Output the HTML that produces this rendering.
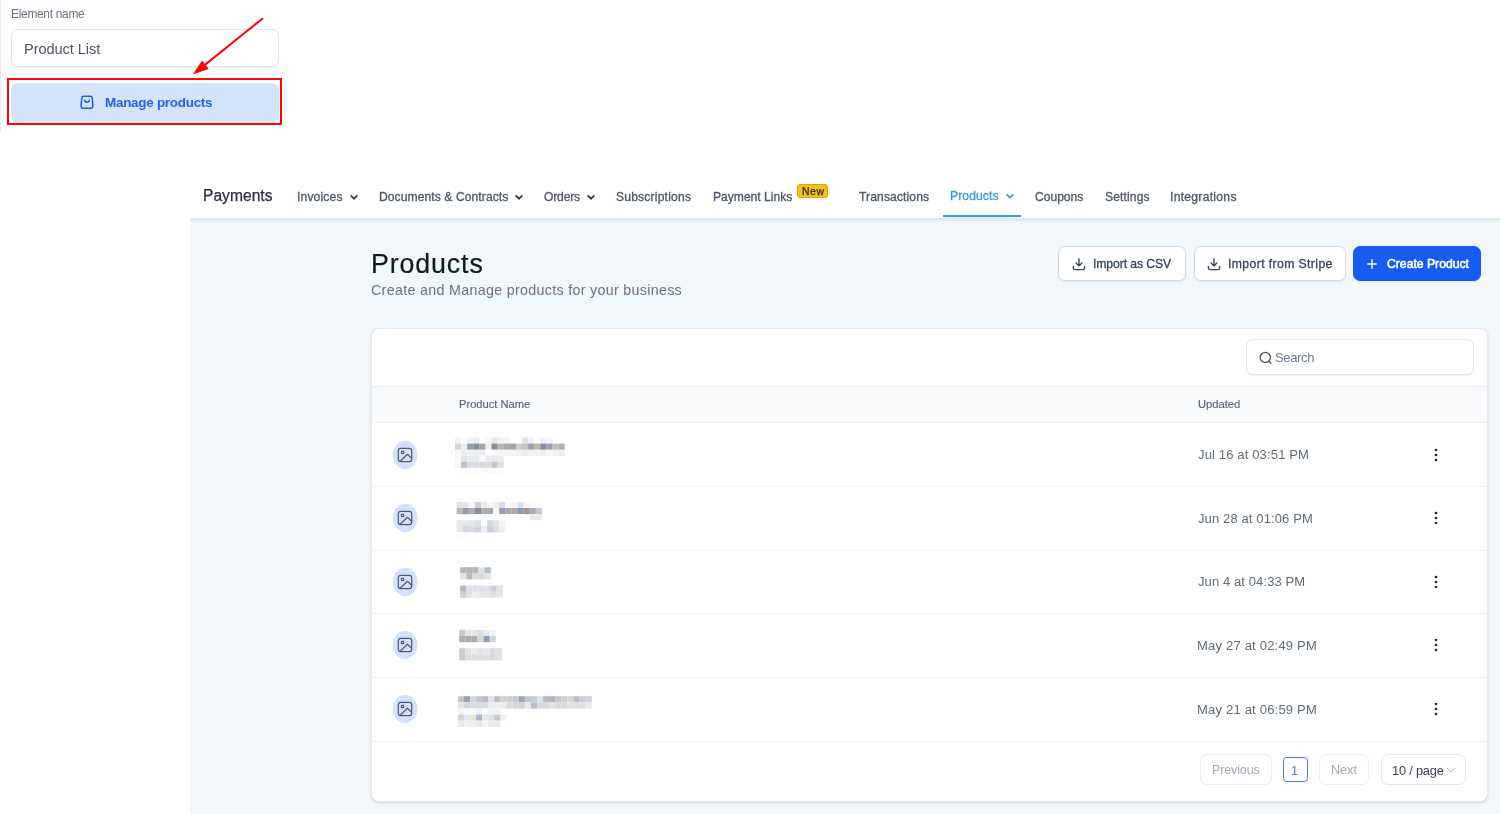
<!DOCTYPE html>
<html lang="en">
<head>
<meta charset="utf-8">
<title>Products</title>
<style>
*{box-sizing:border-box;margin:0;padding:0}
html,body{width:1500px;height:814px;overflow:hidden;background:#fff}
body{position:relative;font-family:"Liberation Sans",sans-serif;color:#374151}
.abs{position:absolute;white-space:nowrap}
.t{line-height:20px;height:20px;will-change:transform}
h1{font-weight:normal}
#leftline{left:0;top:0;width:1px;height:131px;background:#e9ebf2}
#inp{left:10.8px;top:29px;width:268.7px;height:38.4px;border:1px solid #e1e3eb;border-radius:7px;background:#fff;box-shadow:0 1px 1.5px rgba(16,24,40,.07)}
#mbtn{left:10.8px;top:83px;width:268.6px;height:40px;border-radius:7px;background:#d2e3fa}
#redbox{left:6.8px;top:78px;width:275.7px;height:46.8px;border:2.2px solid #fd0505}
#nav{left:190px;top:165px;width:1310px;height:53px;background:#fff}
#navsh{left:190px;top:218px;width:1310px;height:5px;background:linear-gradient(#e4e9ed 0,#dde3e8 22%,#e5ebef 50%,#eef3f6 75%,#f2f7fa 100%)}
#main{left:190px;top:218px;width:1310px;height:596px;background:#f2f7fa}
#uline{left:942.8px;top:214.5px;width:78.5px;height:2.2px;background:#3a9bdc}
#badge{left:797.2px;top:184px;width:31px;height:14px;background:#fbbf15;border:1px solid #dba30c;border-radius:3px}
.btn{top:246px;height:35px;border:1px solid #d4d9e2;border-radius:7px;background:#fff;box-shadow:0 1px 2px rgba(16,24,40,.06)}
#card{left:371px;top:328px;width:1117px;height:474px;background:#fff;border:1px solid #e7ebef;border-radius:8px;box-shadow:0 1px 3px rgba(16,24,40,.11),0 1px 2px rgba(16,24,40,.06)}
#search{left:1246px;top:339px;width:227.5px;height:36px;border:1px solid #e3e6ec;border-radius:7px;background:#fff;box-shadow:0 1px 1.5px rgba(16,24,40,.05)}
#thead{left:372px;top:385.8px;width:1115px;height:37.4px;background:#f9fafb;border-top:1px solid #edeff2;border-bottom:1px solid #eceef1}
.rl{left:372px;width:1115px;height:1px;background:#eef0f3}
.pb{top:754px;height:31px;border:1px solid #eceef2;border-radius:7px;background:#fff}
</style>
</head>
<body>
<div class="abs" id="leftline"></div>
<div class="abs" id="inp"></div>
<div class="abs" id="mbtn"></div>
<div class="abs" id="redbox"></div>
<svg class="abs" style="left:79px;top:94px" width="16" height="16" viewBox="0 0 16 16" fill="none" stroke="#2158ea" stroke-width="1.5" stroke-linecap="round" stroke-linejoin="round"><path d="M4.600 2.300h6.800c1 0 1.700.6 1.800 1.600l.7 7.900c.1 1.300-.7 2.400-2.100 2.400H4.200c-1.400 0-2.200-1.100-2.100-2.400l.7-7.900c.1-1 .8-1.600 1.800-1.600z"/><path d="M5.700 6.200c.3 2.600 4.300 2.600 4.600 0"/></svg>
<svg class="abs" style="left:180px;top:10px" width="100" height="75" viewBox="0 0 100 75"><line x1="82.3" y1="8.700" x2="24" y2="55.600" stroke="#fd0505" stroke-width="2" stroke-linecap="round"/><polygon points="12.700,64.500 22.100,50.500 28.700,59" fill="#fd0505"/></svg>

<div class="abs" id="main"></div>
<div class="abs" id="nav"></div>
<div class="abs" id="navsh"></div>
<div class="abs" id="uline"></div>
<div class="abs" id="badge"></div>
<svg class="abs" style="left:349px;top:193px" width="10" height="9" viewBox="0 0 10 9" fill="none" stroke="#333d4d" stroke-width="1.7"><path d="M1.600 2.300 5 5.700 8.400 2.300"/></svg>
<svg class="abs" style="left:514.400px;top:193px" width="10" height="9" viewBox="0 0 10 9" fill="none" stroke="#333d4d" stroke-width="1.7"><path d="M1.600 2.300 5 5.700 8.400 2.300"/></svg>
<svg class="abs" style="left:586.200px;top:193px" width="10" height="9" viewBox="0 0 10 9" fill="none" stroke="#333d4d" stroke-width="1.7"><path d="M1.600 2.300 5 5.700 8.400 2.300"/></svg>
<svg class="abs" style="left:1005.200px;top:192.200px" width="10" height="9" viewBox="0 0 10 9" fill="none" stroke="#3a9bdc" stroke-width="1.7"><path d="M1.600 2.300 5 5.700 8.400 2.300"/></svg>

<div class="abs btn" style="left:1058px;width:128px"></div>
<div class="abs btn" style="left:1193.600px;width:152px"></div>
<div class="abs btn" style="left:1352.800px;width:128.200px;background:#165cef;border-color:#165cef"></div>
<svg class="abs" style="left:1071.800px;top:257.400px" width="14" height="14" viewBox="0 0 14 14" fill="none" stroke="#3a4557" stroke-width="1.35" stroke-linecap="round" stroke-linejoin="round"><path d="M7 1.600v7.200M4.100 6 7 8.900 9.900 6M1.400 9.300v1.600c0 1 .7 1.700 1.700 1.700h7.800c1 0 1.700-.7 1.700-1.700V9.300"/></svg>
<svg class="abs" style="left:1207.200px;top:257.400px" width="14" height="14" viewBox="0 0 14 14" fill="none" stroke="#3a4557" stroke-width="1.35" stroke-linecap="round" stroke-linejoin="round"><path d="M7 1.600v7.200M4.100 6 7 8.900 9.900 6M1.400 9.300v1.600c0 1 .7 1.700 1.700 1.700h7.800c1 0 1.700-.7 1.700-1.700V9.300"/></svg>
<svg class="abs" style="left:1366.100px;top:257.900px" width="12" height="12" viewBox="0 0 12 12" fill="none" stroke="#fff" stroke-width="1.400"><path d="M6 1.300v9.400M1.300 6h9.400"/></svg>

<div class="abs" id="card"></div>
<div class="abs" id="search"></div>
<svg class="abs" style="left:1258px;top:350px" width="16" height="16" viewBox="0 0 16 16" fill="none" stroke="#4a5466" stroke-width="1.3" stroke-linecap="round"><circle cx="7.300" cy="7.400" r="5.100"/><path d="M11 11.200 13 13.200"/></svg>
<div class="abs" id="thead"></div>
<div class="abs rl" style="top:486.200px"></div>
<div class="abs rl" style="top:549.800px"></div>
<div class="abs rl" style="top:613.400px"></div>
<div class="abs rl" style="top:677px"></div>
<div class="abs rl" style="top:740.600px"></div>
<!--GEN-->
<svg class="abs" style="left:0;top:0;filter:blur(.45px)" width="1500" height="814" viewBox="0 0 1500 814">
<rect x="455.0" y="437.6" width="6.19" height="6.2" fill="#f3f3f5"/>
<rect x="461.1" y="437.6" width="6.19" height="6.2" fill="#fafafa"/>
<rect x="467.2" y="437.6" width="6.19" height="6.2" fill="#eef2f6"/>
<rect x="473.3" y="437.6" width="6.19" height="6.2" fill="#ededee"/>
<rect x="485.4" y="437.6" width="6.19" height="6.2" fill="#fbf8f3"/>
<rect x="491.5" y="437.6" width="6.19" height="6.2" fill="#e3e9ee"/>
<rect x="497.6" y="437.6" width="6.19" height="6.2" fill="#f3f3f2"/>
<rect x="503.7" y="437.6" width="6.19" height="6.2" fill="#f4f5f9"/>
<rect x="522.0" y="437.6" width="6.19" height="6.2" fill="#e4e4e5"/>
<rect x="528.1" y="437.6" width="6.19" height="6.2" fill="#f0f1f4"/>
<rect x="534.2" y="437.6" width="6.19" height="6.2" fill="#fdfcfa"/>
<rect x="540.3" y="437.6" width="6.19" height="6.2" fill="#eef0f6"/>
<rect x="546.4" y="437.6" width="6.19" height="6.2" fill="#f2f2f4"/>
<rect x="455.0" y="443.6" width="6.19" height="6.2" fill="#dcd5d8"/>
<rect x="461.1" y="443.6" width="6.19" height="6.2" fill="#eceee8"/>
<rect x="467.2" y="443.6" width="6.19" height="6.2" fill="#8d9db0"/>
<rect x="473.3" y="443.6" width="6.19" height="6.2" fill="#8c8a9e"/>
<rect x="479.4" y="443.6" width="6.19" height="6.2" fill="#a3a39c"/>
<rect x="485.4" y="443.6" width="6.19" height="6.2" fill="#e6eff6"/>
<rect x="491.5" y="443.6" width="6.19" height="6.2" fill="#95888e"/>
<rect x="497.6" y="443.6" width="6.19" height="6.2" fill="#b0b5ba"/>
<rect x="503.7" y="443.6" width="6.19" height="6.2" fill="#a6a9ad"/>
<rect x="509.8" y="443.6" width="6.19" height="6.2" fill="#9ba5a3"/>
<rect x="515.9" y="443.6" width="6.19" height="6.2" fill="#c9ced4"/>
<rect x="522.0" y="443.6" width="6.19" height="6.2" fill="#c1c3c6"/>
<rect x="528.1" y="443.6" width="6.19" height="6.2" fill="#a0a1aa"/>
<rect x="534.2" y="443.6" width="6.19" height="6.2" fill="#bab6ac"/>
<rect x="540.3" y="443.6" width="6.19" height="6.2" fill="#7d8dab"/>
<rect x="546.4" y="443.6" width="6.19" height="6.2" fill="#a39fa8"/>
<rect x="552.4" y="443.6" width="6.19" height="6.2" fill="#c0bfbb"/>
<rect x="558.5" y="443.6" width="6.19" height="6.2" fill="#a9b3c3"/>
<rect x="455.0" y="449.7" width="6.19" height="6.2" fill="#fbf9f8"/>
<rect x="461.1" y="449.7" width="6.19" height="6.2" fill="#eceef0"/>
<rect x="467.2" y="449.7" width="6.19" height="6.2" fill="#eff1f6"/>
<rect x="473.3" y="449.7" width="6.19" height="6.2" fill="#efeff0"/>
<rect x="479.4" y="449.7" width="6.19" height="6.2" fill="#eeedee"/>
<rect x="485.4" y="449.7" width="6.19" height="6.2" fill="#fbfdfe"/>
<rect x="491.5" y="449.7" width="6.19" height="6.2" fill="#f6f7f7"/>
<rect x="497.6" y="449.7" width="6.19" height="6.2" fill="#f5f5f3"/>
<rect x="503.7" y="449.7" width="6.19" height="6.2" fill="#f3f4f6"/>
<rect x="509.8" y="449.7" width="6.19" height="6.2" fill="#f5f4f3"/>
<rect x="515.9" y="449.7" width="6.19" height="6.2" fill="#eef1f5"/>
<rect x="522.0" y="449.7" width="6.19" height="6.2" fill="#ececec"/>
<rect x="528.1" y="449.7" width="6.19" height="6.2" fill="#f3f3f5"/>
<rect x="534.2" y="449.7" width="6.19" height="6.2" fill="#f0f2f4"/>
<rect x="540.3" y="449.7" width="6.19" height="6.2" fill="#ebedef"/>
<rect x="546.4" y="449.7" width="6.19" height="6.2" fill="#f8f6f3"/>
<rect x="552.4" y="449.7" width="6.19" height="6.2" fill="#eff0f2"/>
<rect x="558.5" y="449.7" width="6.19" height="6.2" fill="#eeeff0"/>
<rect x="455.0" y="455.7" width="6.19" height="6.2" fill="#fbf8f6"/>
<rect x="461.1" y="455.7" width="6.19" height="6.2" fill="#dfe5ea"/>
<rect x="467.2" y="455.7" width="6.19" height="6.2" fill="#e8eaec"/>
<rect x="473.3" y="455.7" width="6.19" height="6.2" fill="#ebebec"/>
<rect x="479.4" y="455.7" width="6.19" height="6.2" fill="#f7fafc"/>
<rect x="485.4" y="455.7" width="6.19" height="6.2" fill="#ebe9e9"/>
<rect x="491.5" y="455.7" width="6.19" height="6.2" fill="#e8e9ed"/>
<rect x="497.6" y="455.7" width="6.19" height="6.2" fill="#e9eef3"/>
<rect x="455.0" y="461.8" width="6.19" height="6.2" fill="#f8f4f2"/>
<rect x="461.1" y="461.8" width="6.19" height="6.2" fill="#b3c0d1"/>
<rect x="467.2" y="461.8" width="6.19" height="6.2" fill="#d9dade"/>
<rect x="473.3" y="461.8" width="6.19" height="6.2" fill="#dcdde0"/>
<rect x="479.4" y="461.8" width="6.19" height="6.2" fill="#d6dbe2"/>
<rect x="485.4" y="461.8" width="6.19" height="6.2" fill="#dbdcdc"/>
<rect x="491.5" y="461.8" width="6.19" height="6.2" fill="#c2c5d2"/>
<rect x="497.6" y="461.8" width="6.19" height="6.2" fill="#dce0e5"/>
<rect x="461.1" y="467.8" width="6.19" height="6.2" fill="#fafafa"/>
<rect x="467.2" y="467.8" width="6.19" height="6.2" fill="#fdfdfd"/>
<rect x="473.3" y="467.8" width="6.19" height="6.2" fill="#fbfbfb"/>
<rect x="479.4" y="467.8" width="6.19" height="6.2" fill="#fefefe"/>
<rect x="485.4" y="467.8" width="6.19" height="6.2" fill="#fbfbfc"/>
<rect x="491.5" y="467.8" width="6.19" height="6.2" fill="#fbfbfb"/>
<rect x="497.6" y="467.8" width="6.19" height="6.2" fill="#fdfdfd"/>
<rect x="456.6" y="502.0" width="6.19" height="6.2" fill="#e3e3e4"/>
<rect x="462.7" y="502.0" width="6.19" height="6.2" fill="#e5e6e7"/>
<rect x="468.8" y="502.0" width="6.19" height="6.2" fill="#f8f8f6"/>
<rect x="474.9" y="502.0" width="6.19" height="6.2" fill="#cfd0d2"/>
<rect x="481.0" y="502.0" width="6.19" height="6.2" fill="#e8ecea"/>
<rect x="487.1" y="502.0" width="6.19" height="6.2" fill="#f6f7f7"/>
<rect x="493.1" y="502.0" width="6.19" height="6.2" fill="#f3efe8"/>
<rect x="499.2" y="502.0" width="6.19" height="6.2" fill="#d9dde7"/>
<rect x="505.3" y="502.0" width="6.19" height="6.2" fill="#f8f9f9"/>
<rect x="511.4" y="502.0" width="6.19" height="6.2" fill="#f6f4ef"/>
<rect x="517.5" y="502.0" width="6.19" height="6.2" fill="#dde2e9"/>
<rect x="523.6" y="502.0" width="6.19" height="6.2" fill="#f7f7f7"/>
<rect x="529.7" y="502.0" width="6.19" height="6.2" fill="#f9f9f8"/>
<rect x="535.8" y="502.0" width="6.19" height="6.2" fill="#fcfcfc"/>
<rect x="456.6" y="508.0" width="6.19" height="6.2" fill="#b9babf"/>
<rect x="462.7" y="508.0" width="6.19" height="6.2" fill="#9f9a9f"/>
<rect x="468.8" y="508.0" width="6.19" height="6.2" fill="#a5b0bb"/>
<rect x="474.9" y="508.0" width="6.19" height="6.2" fill="#8b8e93"/>
<rect x="481.0" y="508.0" width="6.19" height="6.2" fill="#adb0ab"/>
<rect x="487.1" y="508.0" width="6.19" height="6.2" fill="#9ba9b8"/>
<rect x="493.1" y="508.0" width="6.19" height="6.2" fill="#fff9ef"/>
<rect x="499.2" y="508.0" width="6.19" height="6.2" fill="#939db9"/>
<rect x="505.3" y="508.0" width="6.19" height="6.2" fill="#a9a8ab"/>
<rect x="511.4" y="508.0" width="6.19" height="6.2" fill="#a7abab"/>
<rect x="517.5" y="508.0" width="6.19" height="6.2" fill="#8797b4"/>
<rect x="523.6" y="508.0" width="6.19" height="6.2" fill="#a99396"/>
<rect x="529.7" y="508.0" width="6.19" height="6.2" fill="#a8b0b6"/>
<rect x="535.8" y="508.0" width="6.19" height="6.2" fill="#c5c8d6"/>
<rect x="468.8" y="514.0" width="6.19" height="6.2" fill="#fdfdfd"/>
<rect x="474.9" y="514.0" width="6.19" height="6.2" fill="#fdfdfd"/>
<rect x="481.0" y="514.0" width="6.19" height="6.2" fill="#fdfdfd"/>
<rect x="487.1" y="514.0" width="6.19" height="6.2" fill="#fefefe"/>
<rect x="499.2" y="514.0" width="6.19" height="6.2" fill="#fefefe"/>
<rect x="505.3" y="514.0" width="6.19" height="6.2" fill="#fdfdfd"/>
<rect x="511.4" y="514.0" width="6.19" height="6.2" fill="#fdfdfd"/>
<rect x="517.5" y="514.0" width="6.19" height="6.2" fill="#fdfdfd"/>
<rect x="529.7" y="514.0" width="6.19" height="6.2" fill="#ecebe8"/>
<rect x="535.8" y="514.0" width="6.19" height="6.2" fill="#e9eef4"/>
<rect x="456.6" y="520.2" width="6.19" height="6.2" fill="#ebe7e4"/>
<rect x="462.7" y="520.2" width="6.19" height="6.2" fill="#e3e8ee"/>
<rect x="468.8" y="520.2" width="6.19" height="6.2" fill="#e2e5ea"/>
<rect x="474.9" y="520.2" width="6.19" height="6.2" fill="#dddcdf"/>
<rect x="481.0" y="520.2" width="6.19" height="6.2" fill="#fafbfb"/>
<rect x="487.1" y="520.2" width="6.19" height="6.2" fill="#d4d9e1"/>
<rect x="493.1" y="520.2" width="6.19" height="6.2" fill="#e3e2e3"/>
<rect x="499.2" y="520.2" width="6.19" height="6.2" fill="#eff2f7"/>
<rect x="456.6" y="526.2" width="6.19" height="6.2" fill="#ece8e4"/>
<rect x="462.7" y="526.2" width="6.19" height="6.2" fill="#cfd9e5"/>
<rect x="468.8" y="526.2" width="6.19" height="6.2" fill="#d9dde2"/>
<rect x="474.9" y="526.2" width="6.19" height="6.2" fill="#d6d4d8"/>
<rect x="481.0" y="526.2" width="6.19" height="6.2" fill="#ebecee"/>
<rect x="487.1" y="526.2" width="6.19" height="6.2" fill="#c4d0df"/>
<rect x="493.1" y="526.2" width="6.19" height="6.2" fill="#dddcde"/>
<rect x="499.2" y="526.2" width="6.19" height="6.2" fill="#e9eef3"/>
<rect x="456.6" y="532.3" width="6.19" height="6.2" fill="#fbfbfb"/>
<rect x="462.7" y="532.3" width="6.19" height="6.2" fill="#fcfcfc"/>
<rect x="460.2" y="567.2" width="6.19" height="6.2" fill="#b4b9c0"/>
<rect x="466.3" y="567.2" width="6.19" height="6.2" fill="#b9b2b8"/>
<rect x="472.4" y="567.2" width="6.19" height="6.2" fill="#b5b7bb"/>
<rect x="478.5" y="567.2" width="6.19" height="6.2" fill="#e1e2e8"/>
<rect x="484.6" y="567.2" width="6.19" height="6.2" fill="#b5bec6"/>
<rect x="460.2" y="573.2" width="6.19" height="6.2" fill="#e1e6e3"/>
<rect x="466.3" y="573.2" width="6.19" height="6.2" fill="#c0b8bc"/>
<rect x="472.4" y="573.2" width="6.19" height="6.2" fill="#d9dbdb"/>
<rect x="478.5" y="573.2" width="6.19" height="6.2" fill="#d5d9dd"/>
<rect x="484.6" y="573.2" width="6.19" height="6.2" fill="#e0e5e4"/>
<rect x="460.2" y="585.6" width="6.19" height="6.2" fill="#b1bac9"/>
<rect x="466.3" y="585.6" width="6.19" height="6.2" fill="#e3e2e1"/>
<rect x="472.4" y="585.6" width="6.19" height="6.2" fill="#dde0e8"/>
<rect x="478.5" y="585.6" width="6.19" height="6.2" fill="#dcdfe6"/>
<rect x="484.6" y="585.6" width="6.19" height="6.2" fill="#e0e1e4"/>
<rect x="490.6" y="585.6" width="6.19" height="6.2" fill="#cacdd5"/>
<rect x="496.7" y="585.6" width="6.19" height="6.2" fill="#e0e2ea"/>
<rect x="460.2" y="591.6" width="6.19" height="6.2" fill="#c9d0da"/>
<rect x="466.3" y="591.6" width="6.19" height="6.2" fill="#e1e2e6"/>
<rect x="472.4" y="591.6" width="6.19" height="6.2" fill="#ecedef"/>
<rect x="478.5" y="591.6" width="6.19" height="6.2" fill="#e5e6ea"/>
<rect x="484.6" y="591.6" width="6.19" height="6.2" fill="#e4e5e9"/>
<rect x="490.6" y="591.6" width="6.19" height="6.2" fill="#dedfe4"/>
<rect x="496.7" y="591.6" width="6.19" height="6.2" fill="#e7e8ee"/>
<rect x="459.2" y="630.0" width="6.19" height="6.2" fill="#c9c9cb"/>
<rect x="465.3" y="630.0" width="6.19" height="6.2" fill="#e3e4e7"/>
<rect x="471.4" y="630.0" width="6.19" height="6.2" fill="#e8e8ea"/>
<rect x="477.5" y="630.0" width="6.19" height="6.2" fill="#dddcde"/>
<rect x="483.6" y="630.0" width="6.19" height="6.2" fill="#eaecec"/>
<rect x="489.6" y="630.0" width="6.19" height="6.2" fill="#f3f4f7"/>
<rect x="459.2" y="636.0" width="6.19" height="6.2" fill="#b0b0b4"/>
<rect x="465.3" y="636.0" width="6.19" height="6.2" fill="#a9adad"/>
<rect x="471.4" y="636.0" width="6.19" height="6.2" fill="#adadb1"/>
<rect x="477.5" y="636.0" width="6.19" height="6.2" fill="#d9dac5"/>
<rect x="483.6" y="636.0" width="6.19" height="6.2" fill="#8e9bb3"/>
<rect x="489.6" y="636.0" width="6.19" height="6.2" fill="#d2d7de"/>
<rect x="459.2" y="648.2" width="6.19" height="6.2" fill="#c8cdd3"/>
<rect x="465.3" y="648.2" width="6.19" height="6.2" fill="#e3e0e4"/>
<rect x="471.4" y="648.2" width="6.19" height="6.2" fill="#e8eced"/>
<rect x="477.5" y="648.2" width="6.19" height="6.2" fill="#dfe3ea"/>
<rect x="483.6" y="648.2" width="6.19" height="6.2" fill="#e7e7e8"/>
<rect x="489.6" y="648.2" width="6.19" height="6.2" fill="#d9dadc"/>
<rect x="495.7" y="648.2" width="6.19" height="6.2" fill="#d9e0e6"/>
<rect x="459.2" y="654.2" width="6.19" height="6.2" fill="#c9cacd"/>
<rect x="465.3" y="654.2" width="6.19" height="6.2" fill="#dddee4"/>
<rect x="471.4" y="654.2" width="6.19" height="6.2" fill="#dde2e8"/>
<rect x="477.5" y="654.2" width="6.19" height="6.2" fill="#dde1e8"/>
<rect x="483.6" y="654.2" width="6.19" height="6.2" fill="#dfdfe3"/>
<rect x="489.6" y="654.2" width="6.19" height="6.2" fill="#d8d9db"/>
<rect x="495.7" y="654.2" width="6.19" height="6.2" fill="#d8dfe6"/>
<rect x="457.8" y="690.2" width="6.19" height="6.2" fill="#fcfcfc"/>
<rect x="463.9" y="690.2" width="6.19" height="6.2" fill="#fdfdfd"/>
<rect x="482.2" y="690.2" width="6.19" height="6.2" fill="#fdfdfd"/>
<rect x="494.3" y="690.2" width="6.19" height="6.2" fill="#fcfcfc"/>
<rect x="500.4" y="690.2" width="6.19" height="6.2" fill="#fdfdfd"/>
<rect x="518.7" y="690.2" width="6.19" height="6.2" fill="#fcfcfc"/>
<rect x="543.1" y="690.2" width="6.19" height="6.2" fill="#fcfcfc"/>
<rect x="549.1" y="690.2" width="6.19" height="6.2" fill="#fcfcfc"/>
<rect x="585.7" y="690.2" width="6.19" height="6.2" fill="#fdfdfd"/>
<rect x="457.8" y="696.2" width="6.19" height="6.2" fill="#c7c5c8"/>
<rect x="463.9" y="696.2" width="6.19" height="6.2" fill="#96a0a8"/>
<rect x="470.0" y="696.2" width="6.19" height="6.2" fill="#d7d7d9"/>
<rect x="476.1" y="696.2" width="6.19" height="6.2" fill="#c2c6cc"/>
<rect x="482.2" y="696.2" width="6.19" height="6.2" fill="#b9b7be"/>
<rect x="488.2" y="696.2" width="6.19" height="6.2" fill="#e1e2e7"/>
<rect x="494.3" y="696.2" width="6.19" height="6.2" fill="#b8bdc0"/>
<rect x="500.4" y="696.2" width="6.19" height="6.2" fill="#cfcfd5"/>
<rect x="506.5" y="696.2" width="6.19" height="6.2" fill="#cfcfcf"/>
<rect x="512.6" y="696.2" width="6.19" height="6.2" fill="#c5c9d5"/>
<rect x="518.7" y="696.2" width="6.19" height="6.2" fill="#9fa7b0"/>
<rect x="524.8" y="696.2" width="6.19" height="6.2" fill="#cbc8c1"/>
<rect x="530.9" y="696.2" width="6.19" height="6.2" fill="#c5d0d2"/>
<rect x="537.0" y="696.2" width="6.19" height="6.2" fill="#e0e3e9"/>
<rect x="543.1" y="696.2" width="6.19" height="6.2" fill="#b4bbbb"/>
<rect x="549.1" y="696.2" width="6.19" height="6.2" fill="#b4b2bd"/>
<rect x="555.2" y="696.2" width="6.19" height="6.2" fill="#c3c5c9"/>
<rect x="561.3" y="696.2" width="6.19" height="6.2" fill="#d2d0d0"/>
<rect x="567.4" y="696.2" width="6.19" height="6.2" fill="#d6d8d8"/>
<rect x="573.5" y="696.2" width="6.19" height="6.2" fill="#bdbdc8"/>
<rect x="579.6" y="696.2" width="6.19" height="6.2" fill="#d0d0cd"/>
<rect x="585.7" y="696.2" width="6.19" height="6.2" fill="#d2d0e0"/>
<rect x="457.8" y="702.4" width="6.19" height="6.2" fill="#e5e3e2"/>
<rect x="463.9" y="702.4" width="6.19" height="6.2" fill="#d5d6da"/>
<rect x="470.0" y="702.4" width="6.19" height="6.2" fill="#dcdde0"/>
<rect x="476.1" y="702.4" width="6.19" height="6.2" fill="#dadbdf"/>
<rect x="482.2" y="702.4" width="6.19" height="6.2" fill="#d9d9de"/>
<rect x="488.2" y="702.4" width="6.19" height="6.2" fill="#ededee"/>
<rect x="494.3" y="702.4" width="6.19" height="6.2" fill="#eeefee"/>
<rect x="500.4" y="702.4" width="6.19" height="6.2" fill="#eeecec"/>
<rect x="506.5" y="702.4" width="6.19" height="6.2" fill="#dddad9"/>
<rect x="512.6" y="702.4" width="6.19" height="6.2" fill="#d3d6de"/>
<rect x="518.7" y="702.4" width="6.19" height="6.2" fill="#cfd3db"/>
<rect x="524.8" y="702.4" width="6.19" height="6.2" fill="#ebe9e0"/>
<rect x="530.9" y="702.4" width="6.19" height="6.2" fill="#b7bfc8"/>
<rect x="537.0" y="702.4" width="6.19" height="6.2" fill="#d3d9e2"/>
<rect x="543.1" y="702.4" width="6.19" height="6.2" fill="#d9dad8"/>
<rect x="549.1" y="702.4" width="6.19" height="6.2" fill="#e4e4ea"/>
<rect x="555.2" y="702.4" width="6.19" height="6.2" fill="#dbdadc"/>
<rect x="561.3" y="702.4" width="6.19" height="6.2" fill="#dcdbdb"/>
<rect x="567.4" y="702.4" width="6.19" height="6.2" fill="#e0e2e2"/>
<rect x="573.5" y="702.4" width="6.19" height="6.2" fill="#dfdfe5"/>
<rect x="579.6" y="702.4" width="6.19" height="6.2" fill="#e0e0dd"/>
<rect x="585.7" y="702.4" width="6.19" height="6.2" fill="#ebebf2"/>
<rect x="457.8" y="708.4" width="6.19" height="6.2" fill="#f3f3f4"/>
<rect x="463.9" y="708.4" width="6.19" height="6.2" fill="#fafafa"/>
<rect x="470.0" y="708.4" width="6.19" height="6.2" fill="#f8f9fb"/>
<rect x="476.1" y="708.4" width="6.19" height="6.2" fill="#f1f2f4"/>
<rect x="482.2" y="708.4" width="6.19" height="6.2" fill="#fefefc"/>
<rect x="488.2" y="708.4" width="6.19" height="6.2" fill="#f1f3f5"/>
<rect x="494.3" y="708.4" width="6.19" height="6.2" fill="#f1f2f4"/>
<rect x="457.8" y="714.5" width="6.19" height="6.2" fill="#d2d3d7"/>
<rect x="463.9" y="714.5" width="6.19" height="6.2" fill="#e2e5ea"/>
<rect x="470.0" y="714.5" width="6.19" height="6.2" fill="#e6e5e0"/>
<rect x="476.1" y="714.5" width="6.19" height="6.2" fill="#a9b9cd"/>
<rect x="482.2" y="714.5" width="6.19" height="6.2" fill="#e9e7e7"/>
<rect x="488.2" y="714.5" width="6.19" height="6.2" fill="#dae3e8"/>
<rect x="494.3" y="714.5" width="6.19" height="6.2" fill="#cbc6c8"/>
<rect x="500.4" y="714.5" width="6.19" height="6.2" fill="#e8f2fb"/>
<rect x="457.8" y="720.6" width="6.19" height="6.2" fill="#e8e9ec"/>
<rect x="463.9" y="720.6" width="6.19" height="6.2" fill="#eef0f1"/>
<rect x="470.0" y="720.6" width="6.19" height="6.2" fill="#e9eef2"/>
<rect x="476.1" y="720.6" width="6.19" height="6.2" fill="#e7e8ed"/>
<rect x="482.2" y="720.6" width="6.19" height="6.2" fill="#f3f3f3"/>
<rect x="488.2" y="720.6" width="6.19" height="6.2" fill="#e8ebf0"/>
<rect x="494.3" y="720.6" width="6.19" height="6.2" fill="#e9eaed"/>
</svg>
<svg class="abs" style="left:390px;top:438.7px" width="30" height="32" viewBox="0 0 30 32"><ellipse cx="15.15" cy="16" rx="12.3" ry="14.15" fill="#d4e1fc"/></svg>
<svg class="abs" style="left:397px;top:446.7px" width="16" height="16" viewBox="0 0 16 16" fill="none" stroke="#505a6a" stroke-width="1.2" stroke-linecap="round" stroke-linejoin="round"><rect x="1.3" y="1.300" width="13.4" height="13.4" rx="2.4"/><circle cx="5.6" cy="5.400" r="1.3"/><path d="M3.2 14.3 10.400 7.300 14.600 11.200"/></svg>
<svg class="abs" style="left:1433px;top:446.7px" width="6" height="16" viewBox="0 0 6 16" fill="#1f2937"><circle cx="3" cy="3" r="1.35"/><circle cx="3" cy="8" r="1.35"/><circle cx="3" cy="13" r="1.35"/></svg>
<svg class="abs" style="left:390px;top:502.3px" width="30" height="32" viewBox="0 0 30 32"><ellipse cx="15.15" cy="16" rx="12.3" ry="14.15" fill="#d4e1fc"/></svg>
<svg class="abs" style="left:397px;top:510.3px" width="16" height="16" viewBox="0 0 16 16" fill="none" stroke="#505a6a" stroke-width="1.2" stroke-linecap="round" stroke-linejoin="round"><rect x="1.3" y="1.300" width="13.4" height="13.4" rx="2.4"/><circle cx="5.6" cy="5.400" r="1.3"/><path d="M3.2 14.3 10.400 7.300 14.600 11.200"/></svg>
<svg class="abs" style="left:1433px;top:510.3px" width="6" height="16" viewBox="0 0 6 16" fill="#1f2937"><circle cx="3" cy="3" r="1.35"/><circle cx="3" cy="8" r="1.35"/><circle cx="3" cy="13" r="1.35"/></svg>
<svg class="abs" style="left:390px;top:565.9px" width="30" height="32" viewBox="0 0 30 32"><ellipse cx="15.15" cy="16" rx="12.3" ry="14.15" fill="#d4e1fc"/></svg>
<svg class="abs" style="left:397px;top:573.9px" width="16" height="16" viewBox="0 0 16 16" fill="none" stroke="#505a6a" stroke-width="1.2" stroke-linecap="round" stroke-linejoin="round"><rect x="1.3" y="1.300" width="13.4" height="13.4" rx="2.4"/><circle cx="5.6" cy="5.400" r="1.3"/><path d="M3.2 14.3 10.400 7.300 14.600 11.200"/></svg>
<svg class="abs" style="left:1433px;top:573.9px" width="6" height="16" viewBox="0 0 6 16" fill="#1f2937"><circle cx="3" cy="3" r="1.35"/><circle cx="3" cy="8" r="1.35"/><circle cx="3" cy="13" r="1.35"/></svg>
<svg class="abs" style="left:390px;top:629.4px" width="30" height="32" viewBox="0 0 30 32"><ellipse cx="15.15" cy="16" rx="12.3" ry="14.15" fill="#d4e1fc"/></svg>
<svg class="abs" style="left:397px;top:637.4px" width="16" height="16" viewBox="0 0 16 16" fill="none" stroke="#505a6a" stroke-width="1.2" stroke-linecap="round" stroke-linejoin="round"><rect x="1.3" y="1.300" width="13.4" height="13.4" rx="2.4"/><circle cx="5.6" cy="5.400" r="1.3"/><path d="M3.2 14.3 10.400 7.300 14.600 11.200"/></svg>
<svg class="abs" style="left:1433px;top:637.4px" width="6" height="16" viewBox="0 0 6 16" fill="#1f2937"><circle cx="3" cy="3" r="1.35"/><circle cx="3" cy="8" r="1.35"/><circle cx="3" cy="13" r="1.35"/></svg>
<svg class="abs" style="left:390px;top:693.0px" width="30" height="32" viewBox="0 0 30 32"><ellipse cx="15.15" cy="16" rx="12.3" ry="14.15" fill="#d4e1fc"/></svg>
<svg class="abs" style="left:397px;top:701.0px" width="16" height="16" viewBox="0 0 16 16" fill="none" stroke="#505a6a" stroke-width="1.2" stroke-linecap="round" stroke-linejoin="round"><rect x="1.3" y="1.300" width="13.4" height="13.4" rx="2.4"/><circle cx="5.6" cy="5.400" r="1.3"/><path d="M3.2 14.3 10.400 7.300 14.600 11.200"/></svg>
<svg class="abs" style="left:1433px;top:701.0px" width="6" height="16" viewBox="0 0 6 16" fill="#1f2937"><circle cx="3" cy="3" r="1.35"/><circle cx="3" cy="8" r="1.35"/><circle cx="3" cy="13" r="1.35"/></svg>
<!--/GEN-->
<div class="abs pb" style="left:1200.300px;width:71.300px"></div>
<div class="abs" style="left:1283px;top:757.200px;width:24.800px;height:24.800px;border:1.800px solid #467af6;border-radius:3.500px;background:#fff"></div>
<div class="abs pb" style="left:1319.200px;width:50px"></div>
<div class="abs pb" style="left:1380.500px;width:85.800px;border-color:#e4e7ec"></div>
<svg class="abs" style="left:1446.400px;top:766px" width="10" height="8" viewBox="0 0 10 8" fill="none" stroke="#b3bac5" stroke-width="1"><path d="M1 2 5 6 9 2"/></svg>
<div class="abs t" id="elname" style="left:10.52px;top:4.00px;font-size:11.9px;font-weight:normal;color:#6a7383;letter-spacing:-0.269px;">Element name</div>
<div class="abs t" id="inptxt" style="left:23.67px;top:39.00px;font-size:14.6px;font-weight:normal;color:#4a5468;letter-spacing:-0.073px;">Product List</div>
<div class="abs t" id="mtxt" style="left:104.66px;top:93.00px;font-size:13.4px;font-weight:bold;color:#2860ea;letter-spacing:-0.237px;">Manage products</div>
<div class="abs t" id="pay" style="left:202.90px;top:186.00px;font-size:15.6px;font-weight:normal;color:#273142;letter-spacing:0.023px;-webkit-text-stroke:.25px #273142;">Payments</div>
<div class="abs t" id="n1" style="left:297.15px;top:187.00px;font-size:12.1px;font-weight:normal;color:#4d5869;letter-spacing:0.154px;-webkit-text-stroke:.32px #4d5869;">Invoices</div>
<div class="abs t" id="n2" style="left:378.96px;top:187.00px;font-size:12.1px;font-weight:normal;color:#4d5869;letter-spacing:0.082px;-webkit-text-stroke:.32px #4d5869;">Documents &amp; Contracts</div>
<div class="abs t" id="n3" style="left:543.77px;top:187.00px;font-size:12.1px;font-weight:normal;color:#4d5869;letter-spacing:-0.163px;-webkit-text-stroke:.32px #4d5869;">Orders</div>
<div class="abs t" id="n4" style="left:615.86px;top:187.00px;font-size:12.1px;font-weight:normal;color:#4d5869;letter-spacing:0.196px;-webkit-text-stroke:.32px #4d5869;">Subscriptions</div>
<div class="abs t" id="n5" style="left:713.01px;top:187.00px;font-size:12.1px;font-weight:normal;color:#4d5869;letter-spacing:-0.006px;-webkit-text-stroke:.32px #4d5869;">Payment Links</div>
<div class="abs t" id="new" style="left:802.07px;top:182.00px;font-size:10.4px;font-weight:normal;color:#1f2937;letter-spacing:0.559px;-webkit-text-stroke:.25px #1f2937;">New</div>
<div class="abs t" id="n6" style="left:858.88px;top:187.00px;font-size:12.1px;font-weight:normal;color:#4d5869;letter-spacing:0.115px;-webkit-text-stroke:.32px #4d5869;">Transactions</div>
<div class="abs t" id="n7" style="left:949.81px;top:186.00px;font-size:12.1px;font-weight:normal;color:#3a9bdc;letter-spacing:0.103px;-webkit-text-stroke:.32px #3a9bdc;">Products</div>
<div class="abs t" id="n8" style="left:1035.24px;top:187.00px;font-size:12.1px;font-weight:normal;color:#4d5869;letter-spacing:-0.011px;-webkit-text-stroke:.32px #4d5869;">Coupons</div>
<div class="abs t" id="n9" style="left:1104.59px;top:187.00px;font-size:12.1px;font-weight:normal;color:#4d5869;letter-spacing:0.121px;-webkit-text-stroke:.32px #4d5869;">Settings</div>
<div class="abs t" id="n10" style="left:1169.70px;top:187.00px;font-size:12.1px;font-weight:normal;color:#4d5869;letter-spacing:0.295px;-webkit-text-stroke:.32px #4d5869;">Integrations</div>
<div class="abs t" id="title" style="left:371.18px;top:254.00px;font-size:26.8px;font-weight:normal;color:#101828;letter-spacing:0.864px;-webkit-text-stroke:.2px #101828;">Products</div>
<div class="abs t" id="sub" style="left:371.31px;top:280.00px;font-size:14.3px;font-weight:normal;color:#69748a;letter-spacing:0.296px;">Create and Manage products for your business</div>
<div class="abs t" id="b1" style="left:1093.35px;top:254.00px;font-size:12.2px;font-weight:normal;color:#374357;letter-spacing:-0.093px;-webkit-text-stroke:.28px #374357;">Import as CSV</div>
<div class="abs t" id="b2" style="left:1228.02px;top:254.00px;font-size:12.2px;font-weight:normal;color:#374357;letter-spacing:0.403px;-webkit-text-stroke:.28px #374357;">Import from Stripe</div>
<div class="abs t" id="b3" style="left:1386.56px;top:254.00px;font-size:12.2px;font-weight:normal;color:#ffffff;letter-spacing:0.001px;-webkit-text-stroke:.55px #fff;">Create Product</div>
<div class="abs t" id="stx" style="left:1275.34px;top:348.00px;font-size:13.0px;font-weight:normal;color:#6e7888;letter-spacing:-0.352px;">Search</div>
<div class="abs t" id="th1" style="left:458.85px;top:394.00px;font-size:11.2px;font-weight:normal;color:#596477;letter-spacing:-0.026px;-webkit-text-stroke:.15px #596477;">Product Name</div>
<div class="abs t" id="th2" style="left:1198.18px;top:394.00px;font-size:11.2px;font-weight:normal;color:#596477;letter-spacing:0.004px;-webkit-text-stroke:.15px #596477;">Updated</div>
<div class="abs t" id="d1" style="left:1198.10px;top:445.00px;font-size:13.0px;font-weight:normal;color:#606b7c;letter-spacing:0.149px;">Jul 16 at 03:51 PM</div>
<div class="abs t" id="d2" style="left:1198.00px;top:509.00px;font-size:13.0px;font-weight:normal;color:#606b7c;letter-spacing:0.123px;">Jun 28 at 01:06 PM</div>
<div class="abs t" id="d3" style="left:1198.38px;top:572.00px;font-size:13.0px;font-weight:normal;color:#606b7c;letter-spacing:0.101px;">Jun 4 at 04:33 PM</div>
<div class="abs t" id="d4" style="left:1197.04px;top:636.00px;font-size:13.0px;font-weight:normal;color:#606b7c;letter-spacing:0.205px;">May 27 at 02:49 PM</div>
<div class="abs t" id="d5" style="left:1197.04px;top:700.00px;font-size:13.0px;font-weight:normal;color:#606b7c;letter-spacing:0.205px;">May 21 at 06:59 PM</div>
<div class="abs t" id="pprev" style="left:1212.31px;top:760.00px;font-size:12.6px;font-weight:normal;color:#a0a8b5;letter-spacing:-0.172px;">Previous</div>
<div class="abs t" id="p1" style="left:1291.17px;top:761.00px;font-size:12.6px;font-weight:normal;color:#5b6cf0;letter-spacing:0.000px;">1</div>
<div class="abs t" id="pnext" style="left:1330.50px;top:760.00px;font-size:12.6px;font-weight:normal;color:#a0a8b5;letter-spacing:0.001px;">Next</div>
<div class="abs t" id="psize" style="left:1391.80px;top:761.00px;font-size:12.8px;font-weight:normal;color:#384253;letter-spacing:-0.194px;">10 / page</div>
</body>
</html>
